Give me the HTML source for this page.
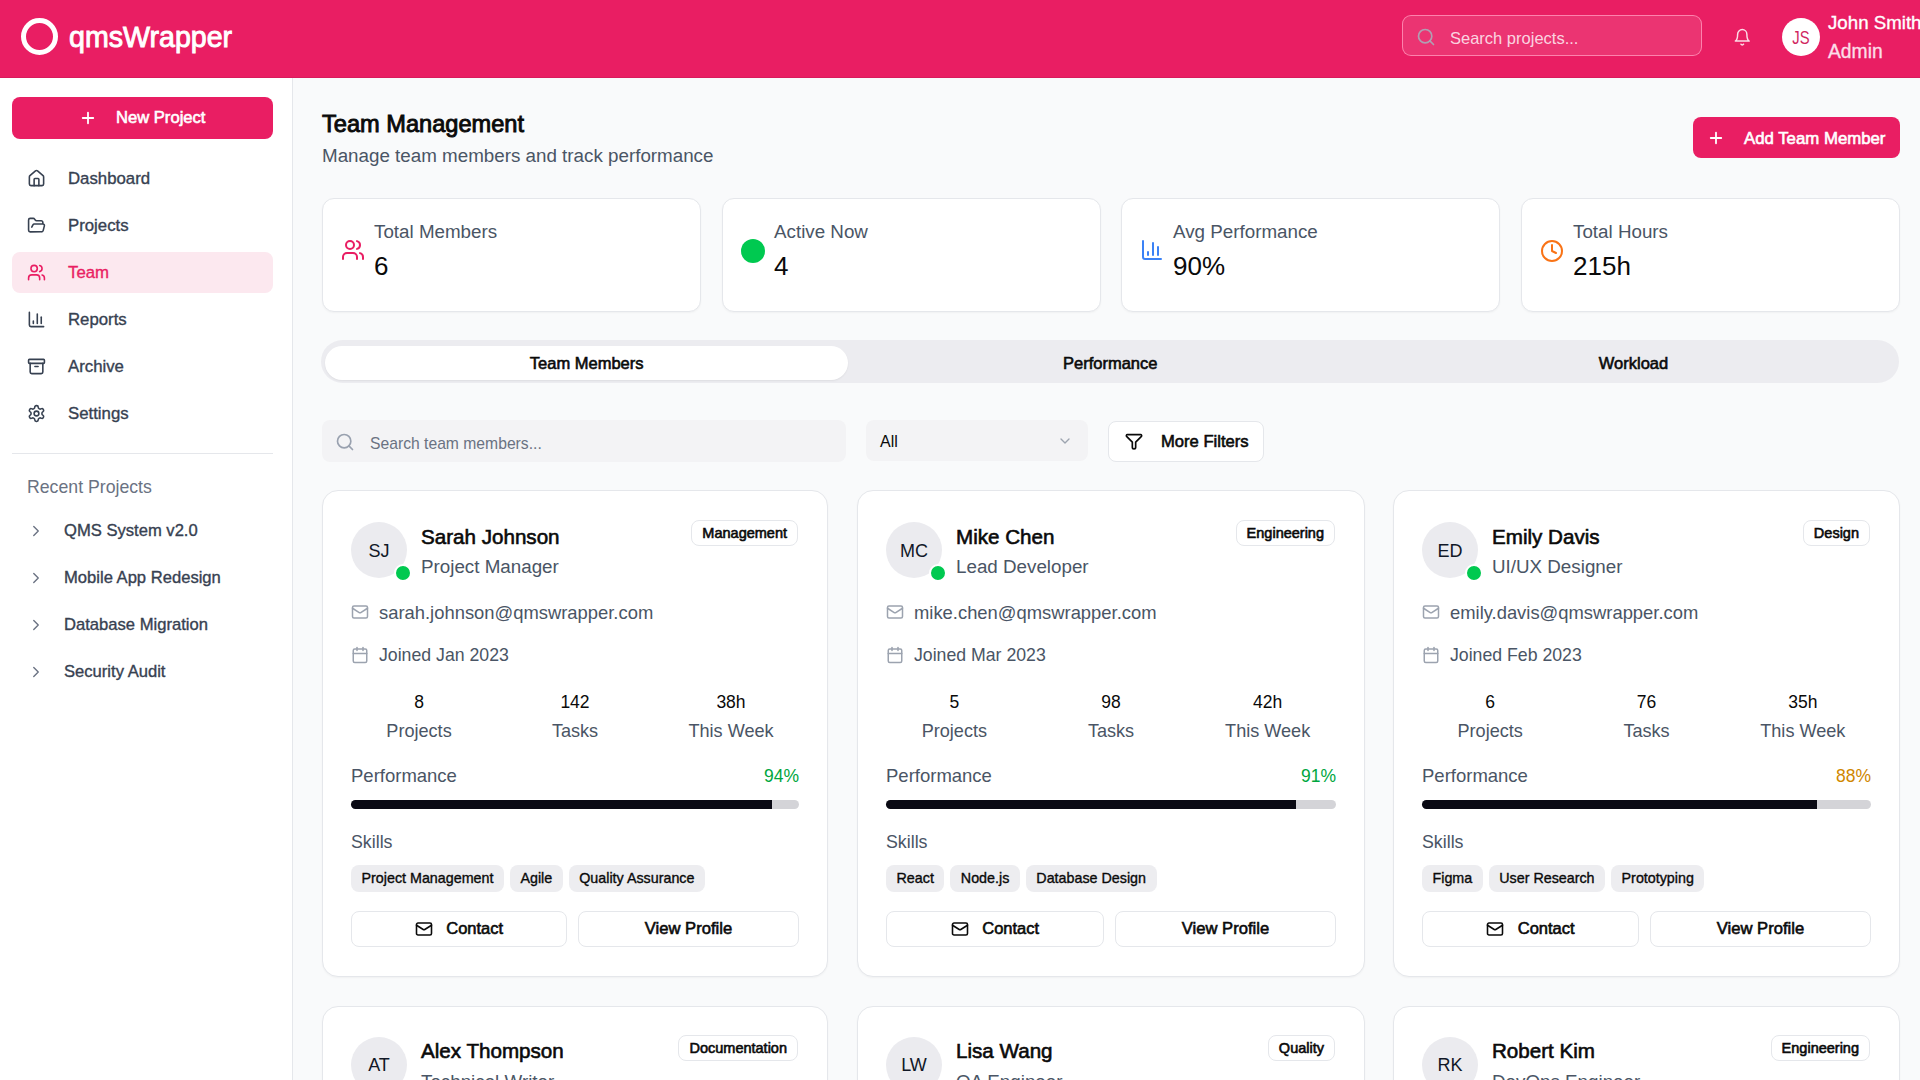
<!DOCTYPE html>
<html><head><meta charset="utf-8"><title>qmsWrapper - Team Management</title>
<style>
html,body{margin:0;padding:0;width:1920px;height:1080px;overflow:hidden;background:#f9fafb;}
body{position:relative;font-family:"Liberation Sans",sans-serif;}
.t{position:absolute;white-space:nowrap;}
.b{position:absolute;}
.i{position:absolute;}
</style></head><body>
<div class="b" style="left:0.00px;top:0.00px;width:1920.00px;height:78.00px;background:#e91e63;"></div>
<div class="b" style="left:0.00px;top:77.00px;width:1920.00px;height:1.00px;background:#d81b5c;"></div>
<div class="b" style="left:21.00px;top:18.00px;width:37.00px;height:37.00px;border:5px solid #fff;border-radius:50%;box-sizing:border-box;"></div>
<div class="t" style="left:69.00px;top:22.79px;font-size:28.6px;line-height:28.6px;color:#fff;font-weight:400;-webkit-text-stroke:0.9px #fff;">qmsWrapper</div>
<div class="b" style="left:1402.00px;top:15.00px;width:300.00px;height:41.00px;background:rgba(255,255,255,0.1);border:1px solid rgba(255,140,180,0.9);border-radius:9px;box-sizing:border-box;"></div>
<svg class="i" style="left:1416.00px;top:27.00px" width="20" height="20" viewBox="0 0 24 24" fill="none" stroke="rgba(170,170,185,0.9)" stroke-width="2" stroke-linecap="round" stroke-linejoin="round"><circle cx="11" cy="11" r="8"/><path d="m21 21-4.3-4.3"/></svg>
<div class="t" style="left:1450.00px;top:29.83px;font-size:16.5px;line-height:16.5px;color:rgba(255,255,255,0.8);font-weight:400;">Search projects...</div>
<svg class="i" style="left:1733.00px;top:28.00px" width="18.5" height="18.5" viewBox="0 0 24 24" fill="none" stroke="rgba(255,255,255,0.85)" stroke-width="1.9" stroke-linecap="round" stroke-linejoin="round"><path d="M6 8a6 6 0 0 1 12 0c0 7 3 9 3 9H3s3-2 3-9"/><path d="M10.3 21a1.94 1.94 0 0 0 3.4 0"/></svg>
<div class="b" style="left:1782.00px;top:18.00px;width:38.00px;height:38.00px;background:#fff;border-radius:50%;"></div>
<div class="t" style="left:1781px;width:40px;text-align:center;top:28.5px;font-size:18.5px;line-height:18.5px;color:#d02560;transform:scaleX(0.8);">JS</div>
<div class="t" style="left:1828.00px;top:14.17px;font-size:18.7px;line-height:18.7px;color:#fff;font-weight:400;-webkit-text-stroke:0.35px #fff;">John Smith</div>
<div class="t" style="left:1828.00px;top:41.66px;font-size:19.3px;line-height:19.3px;color:#fcdde8;font-weight:400;-webkit-text-stroke:0.35px #fcdde8;">Admin</div>
<div class="b" style="left:0.00px;top:78.00px;width:292.00px;height:1002.00px;background:#fff;"></div>
<div class="b" style="left:292.00px;top:78.00px;width:1.00px;height:1002.00px;background:#e5e7eb;"></div>
<div class="b" style="left:12.00px;top:97.00px;width:261.00px;height:42.00px;background:#e91e63;border-radius:8px;"></div>
<svg class="i" style="left:79.00px;top:109.00px" width="18" height="18" viewBox="0 0 24 24" fill="none" stroke="#fff" stroke-width="2.4" stroke-linecap="round" stroke-linejoin="round"><path d="M5 12h14"/><path d="M12 5v14"/></svg>
<div class="t" style="left:116.00px;top:109.70px;font-size:16.6px;line-height:16.6px;color:#fff;font-weight:400;-webkit-text-stroke:0.6px #fff;">New Project</div>
<svg class="i" style="left:26.50px;top:168.50px" width="19" height="19" viewBox="0 0 24 24" fill="none" stroke="#374151" stroke-width="2" stroke-linecap="round" stroke-linejoin="round"><path d="M15 21v-8a1 1 0 0 0-1-1h-4a1 1 0 0 0-1 1v8"/><path d="M3 10a2 2 0 0 1 .709-1.528l7-5.999a2 2 0 0 1 2.582 0l7 5.999A2 2 0 0 1 21 10v9a2 2 0 0 1-2 2H5a2 2 0 0 1-2-2z"/></svg>
<div class="t" style="left:68.00px;top:170.78px;font-size:16.8px;line-height:16.8px;color:#374151;font-weight:400;-webkit-text-stroke:0.35px #374151;">Dashboard</div>
<svg class="i" style="left:26.50px;top:215.50px" width="19" height="19" viewBox="0 0 24 24" fill="none" stroke="#374151" stroke-width="2" stroke-linecap="round" stroke-linejoin="round"><path d="m6 14 1.5-2.9A2 2 0 0 1 9.24 10H20a2 2 0 0 1 1.94 2.5l-1.54 6a2 2 0 0 1-1.95 1.5H4a2 2 0 0 1-2-2V5a2 2 0 0 1 2-2h3.9a2 2 0 0 1 1.69.9l.81 1.2a2 2 0 0 0 1.67.9H18a2 2 0 0 1 2 2v2"/></svg>
<div class="t" style="left:68.00px;top:217.78px;font-size:16.8px;line-height:16.8px;color:#374151;font-weight:400;-webkit-text-stroke:0.35px #374151;">Projects</div>
<div class="b" style="left:12.00px;top:252.00px;width:261.00px;height:41.00px;background:#fce8ef;border-radius:8px;"></div>
<svg class="i" style="left:26.50px;top:262.50px" width="19" height="19" viewBox="0 0 24 24" fill="none" stroke="#e91e63" stroke-width="2" stroke-linecap="round" stroke-linejoin="round"><path d="M16 21v-2a4 4 0 0 0-4-4H6a4 4 0 0 0-4 4v2"/><circle cx="9" cy="7" r="4"/><path d="M22 21v-2a4 4 0 0 0-3-3.87"/><path d="M16 3.13a4 4 0 0 1 0 7.75"/></svg>
<div class="t" style="left:68.00px;top:264.78px;font-size:16.8px;line-height:16.8px;color:#e91e63;font-weight:400;-webkit-text-stroke:0.35px #e91e63;">Team</div>
<svg class="i" style="left:26.50px;top:309.50px" width="19" height="19" viewBox="0 0 24 24" fill="none" stroke="#374151" stroke-width="2" stroke-linecap="round" stroke-linejoin="round"><path d="M3 3v16a2 2 0 0 0 2 2h16"/><path d="M18 17V9"/><path d="M13 17V5"/><path d="M8 17v-3"/></svg>
<div class="t" style="left:68.00px;top:311.78px;font-size:16.8px;line-height:16.8px;color:#374151;font-weight:400;-webkit-text-stroke:0.35px #374151;">Reports</div>
<svg class="i" style="left:26.50px;top:356.50px" width="19" height="19" viewBox="0 0 24 24" fill="none" stroke="#374151" stroke-width="2" stroke-linecap="round" stroke-linejoin="round"><rect width="20" height="5" x="2" y="3" rx="1"/><path d="M4 8v11a2 2 0 0 0 2 2h12a2 2 0 0 0 2-2V8"/><path d="M10 12h4"/></svg>
<div class="t" style="left:68.00px;top:358.78px;font-size:16.8px;line-height:16.8px;color:#374151;font-weight:400;-webkit-text-stroke:0.35px #374151;">Archive</div>
<svg class="i" style="left:26.50px;top:403.50px" width="19" height="19" viewBox="0 0 24 24" fill="none" stroke="#374151" stroke-width="2" stroke-linecap="round" stroke-linejoin="round"><path d="M12.22 2h-.44a2 2 0 0 0-2 2v.18a2 2 0 0 1-1 1.73l-.43.25a2 2 0 0 1-2 0l-.15-.08a2 2 0 0 0-2.73.73l-.22.38a2 2 0 0 0 .73 2.73l.15.1a2 2 0 0 1 1 1.72v.51a2 2 0 0 1-1 1.74l-.15.09a2 2 0 0 0-.73 2.73l.22.38a2 2 0 0 0 2.73.73l.15-.08a2 2 0 0 1 2 0l.43.25a2 2 0 0 1 1 1.73V20a2 2 0 0 0 2 2h.44a2 2 0 0 0 2-2v-.18a2 2 0 0 1 1-1.73l.43-.25a2 2 0 0 1 2 0l.15.08a2 2 0 0 0 2.73-.73l.22-.39a2 2 0 0 0-.73-2.73l-.15-.08a2 2 0 0 1-1-1.74v-.5a2 2 0 0 1 1-1.74l.15-.09a2 2 0 0 0 .73-2.73l-.22-.38a2 2 0 0 0-2.73-.73l-.15.08a2 2 0 0 1-2 0l-.43-.25a2 2 0 0 1-1-1.73V4a2 2 0 0 0-2-2z"/><circle cx="12" cy="12" r="3"/></svg>
<div class="t" style="left:68.00px;top:405.78px;font-size:16.8px;line-height:16.8px;color:#374151;font-weight:400;-webkit-text-stroke:0.35px #374151;">Settings</div>
<div class="b" style="left:12.00px;top:453.00px;width:261.00px;height:1.00px;background:#e5e7eb;"></div>
<div class="t" style="left:27.00px;top:479.02px;font-size:17.7px;line-height:17.7px;color:#6a7282;font-weight:400;">Recent Projects</div>
<svg class="i" style="left:26.50px;top:522.20px" width="18" height="18" viewBox="0 0 24 24" fill="none" stroke="#6a7282" stroke-width="1.8" stroke-linecap="round" stroke-linejoin="round"><path d="m9 18 6-6-6-6"/></svg>
<div class="t" style="left:64.00px;top:522.65px;font-size:16.6px;line-height:16.6px;color:#374151;font-weight:400;-webkit-text-stroke:0.35px #374151;">QMS System v2.0</div>
<svg class="i" style="left:26.50px;top:569.20px" width="18" height="18" viewBox="0 0 24 24" fill="none" stroke="#6a7282" stroke-width="1.8" stroke-linecap="round" stroke-linejoin="round"><path d="m9 18 6-6-6-6"/></svg>
<div class="t" style="left:64.00px;top:569.65px;font-size:16.6px;line-height:16.6px;color:#374151;font-weight:400;-webkit-text-stroke:0.35px #374151;">Mobile App Redesign</div>
<svg class="i" style="left:26.50px;top:616.20px" width="18" height="18" viewBox="0 0 24 24" fill="none" stroke="#6a7282" stroke-width="1.8" stroke-linecap="round" stroke-linejoin="round"><path d="m9 18 6-6-6-6"/></svg>
<div class="t" style="left:64.00px;top:616.65px;font-size:16.6px;line-height:16.6px;color:#374151;font-weight:400;-webkit-text-stroke:0.35px #374151;">Database Migration</div>
<svg class="i" style="left:26.50px;top:663.20px" width="18" height="18" viewBox="0 0 24 24" fill="none" stroke="#6a7282" stroke-width="1.8" stroke-linecap="round" stroke-linejoin="round"><path d="m9 18 6-6-6-6"/></svg>
<div class="t" style="left:64.00px;top:663.65px;font-size:16.6px;line-height:16.6px;color:#374151;font-weight:400;-webkit-text-stroke:0.35px #374151;">Security Audit</div>
<div class="b" style="left:293.00px;top:78.00px;width:1627.00px;height:1002.00px;background:#f9fafb;"></div>
<div class="t" style="left:322.00px;top:113.02px;font-size:23.6px;line-height:23.6px;color:#0a0a0a;font-weight:400;-webkit-text-stroke:0.9px #0a0a0a;">Team Management</div>
<div class="t" style="left:322.00px;top:147.39px;font-size:18.8px;line-height:18.8px;color:#4a5565;font-weight:400;">Manage team members and track performance</div>
<div class="b" style="left:1693.00px;top:117.00px;width:207.00px;height:41.00px;background:#e91e63;border-radius:8px;"></div>
<svg class="i" style="left:1706.50px;top:129.00px" width="18" height="18" viewBox="0 0 24 24" fill="none" stroke="#fff" stroke-width="2.4" stroke-linecap="round" stroke-linejoin="round"><path d="M5 12h14"/><path d="M12 5v14"/></svg>
<div class="t" style="left:1744.00px;top:130.78px;font-size:16.8px;line-height:16.8px;color:#fff;font-weight:400;-webkit-text-stroke:0.6px #fff;">Add Team Member</div>
<div class="b" style="left:322.00px;top:197.50px;width:379.00px;height:114.00px;background:#fff;border:1px solid #e5e7eb;border-radius:12px;box-sizing:border-box;box-shadow:0 1px 2px rgba(0,0,0,0.04);"></div>
<svg class="i" style="left:341.00px;top:237.70px" width="24" height="24" viewBox="0 0 24 24" fill="none" stroke="#e91e63" stroke-width="2" stroke-linecap="round" stroke-linejoin="round"><path d="M16 21v-2a4 4 0 0 0-4-4H6a4 4 0 0 0-4 4v2"/><circle cx="9" cy="7" r="4"/><path d="M22 21v-2a4 4 0 0 0-3-3.87"/><path d="M16 3.13a4 4 0 0 1 0 7.75"/></svg>
<div class="t" style="left:374.00px;top:222.69px;font-size:18.8px;line-height:18.8px;color:#4a5565;font-weight:400;">Total Members</div>
<div class="t" style="left:374.00px;top:253.29px;font-size:26px;line-height:26px;color:#0a0a0a;font-weight:400;">6</div>
<div class="b" style="left:722.00px;top:197.50px;width:379.00px;height:114.00px;background:#fff;border:1px solid #e5e7eb;border-radius:12px;box-sizing:border-box;box-shadow:0 1px 2px rgba(0,0,0,0.04);"></div>
<div class="b" style="left:741.00px;top:239.00px;width:24.00px;height:24.00px;background:#00c950;border-radius:50%;"></div>
<div class="t" style="left:774.00px;top:222.69px;font-size:18.8px;line-height:18.8px;color:#4a5565;font-weight:400;">Active Now</div>
<div class="t" style="left:774.00px;top:253.29px;font-size:26px;line-height:26px;color:#0a0a0a;font-weight:400;">4</div>
<div class="b" style="left:1121.00px;top:197.50px;width:379.00px;height:114.00px;background:#fff;border:1px solid #e5e7eb;border-radius:12px;box-sizing:border-box;box-shadow:0 1px 2px rgba(0,0,0,0.04);"></div>
<svg class="i" style="left:1140.00px;top:237.70px" width="24" height="24" viewBox="0 0 24 24" fill="none" stroke="#3b82f6" stroke-width="2" stroke-linecap="round" stroke-linejoin="round"><path d="M3 3v16a2 2 0 0 0 2 2h16"/><path d="M18 17V9"/><path d="M13 17V5"/><path d="M8 17v-3"/></svg>
<div class="t" style="left:1173.00px;top:222.69px;font-size:18.8px;line-height:18.8px;color:#4a5565;font-weight:400;">Avg Performance</div>
<div class="t" style="left:1173.00px;top:253.29px;font-size:26px;line-height:26px;color:#0a0a0a;font-weight:400;">90%</div>
<div class="b" style="left:1521.00px;top:197.50px;width:379.00px;height:114.00px;background:#fff;border:1px solid #e5e7eb;border-radius:12px;box-sizing:border-box;box-shadow:0 1px 2px rgba(0,0,0,0.04);"></div>
<svg class="i" style="left:1539.80px;top:238.50px" width="24" height="24" viewBox="0 0 24 24" fill="none" stroke="#f97316" stroke-width="2" stroke-linecap="round" stroke-linejoin="round"><circle cx="12" cy="12" r="10"/><polyline points="12 6 12 12 16 14"/></svg>
<div class="t" style="left:1573.00px;top:222.69px;font-size:18.8px;line-height:18.8px;color:#4a5565;font-weight:400;">Total Hours</div>
<div class="t" style="left:1573.00px;top:253.29px;font-size:26px;line-height:26px;color:#0a0a0a;font-weight:400;">215h</div>
<div class="b" style="left:321.00px;top:340.00px;width:1578.00px;height:43.00px;background:#ececf0;border-radius:22px;"></div>
<div class="b" style="left:325.00px;top:346.00px;width:523.00px;height:34.00px;background:#fff;border-radius:17px;box-shadow:0 1px 2px rgba(0,0,0,0.06);"></div>
<div class="t" style="left:386.70px;width:400px;text-align:center;top:354.53px;font-size:16.5px;line-height:16.5px;color:#0a0a0a;font-weight:400;-webkit-text-stroke:0.6px #0a0a0a;">Team Members</div>
<div class="t" style="left:910.20px;width:400px;text-align:center;top:354.53px;font-size:16.5px;line-height:16.5px;color:#0a0a0a;font-weight:400;-webkit-text-stroke:0.6px #0a0a0a;">Performance</div>
<div class="t" style="left:1433.50px;width:400px;text-align:center;top:354.53px;font-size:16.5px;line-height:16.5px;color:#0a0a0a;font-weight:400;-webkit-text-stroke:0.6px #0a0a0a;">Workload</div>
<div class="b" style="left:322.00px;top:420.00px;width:524.00px;height:42.00px;background:#f3f3f5;border-radius:8px;"></div>
<svg class="i" style="left:335.30px;top:431.80px" width="20" height="20" viewBox="0 0 24 24" fill="none" stroke="#99a1af" stroke-width="2" stroke-linecap="round" stroke-linejoin="round"><circle cx="11" cy="11" r="8"/><path d="m21 21-4.3-4.3"/></svg>
<div class="t" style="left:370.00px;top:435.71px;font-size:15.7px;line-height:15.7px;color:#6a7282;font-weight:400;">Search team members...</div>
<div class="b" style="left:866.00px;top:420.00px;width:222.00px;height:41.00px;background:#f3f3f5;border-radius:8px;"></div>
<div class="t" style="left:880.00px;top:434.46px;font-size:16px;line-height:16px;color:#0a0a0a;font-weight:400;">All</div>
<svg class="i" style="left:1057.00px;top:433.00px" width="16" height="16" viewBox="0 0 24 24" fill="none" stroke="#9ca3af" stroke-width="2" stroke-linecap="round" stroke-linejoin="round"><path d="m6 9 6 6 6-6"/></svg>
<div class="b" style="left:1108.00px;top:421.00px;width:156.00px;height:41.00px;background:#fff;border:1px solid #e5e7eb;border-radius:8px;box-sizing:border-box;"></div>
<svg class="i" style="left:1123.50px;top:431.00px" width="20" height="20" viewBox="0 0 24 24" fill="none" stroke="#0a0a0a" stroke-width="2" stroke-linecap="round" stroke-linejoin="round"><path d="M4 4.4H20a1.2 1.2 0 0 1 .9 2L14 13.4V19.6a2 2 0 0 1-4 0V13.4L3.1 6.4a1.2 1.2 0 0 1 .9-2z"/></svg>
<div class="t" style="left:1161.00px;top:433.95px;font-size:16.6px;line-height:16.6px;color:#0a0a0a;font-weight:400;-webkit-text-stroke:0.6px #0a0a0a;">More Filters</div>
<div class="b" style="left:322.00px;top:490.00px;width:506.00px;height:486.50px;background:#fff;border:1px solid #e5e7eb;border-radius:16px;box-sizing:border-box;box-shadow:0 1px 2px rgba(0,0,0,0.04);"></div>
<div class="b" style="left:351.00px;top:522.00px;width:56.00px;height:56.00px;background:#ebebef;border-radius:50%;"></div>
<div class="t" style="left:351.00px;width:56px;text-align:center;top:541.96px;font-size:18px;line-height:18px;color:#111827;font-weight:400;">SJ</div>
<div class="b" style="left:394.00px;top:563.50px;width:18.00px;height:18.00px;background:#00c950;border:2px solid #fff;border-radius:50%;box-sizing:border-box;"></div>
<div class="t" style="left:421.00px;top:526.56px;font-size:20.6px;line-height:20.6px;color:#0a0a0a;font-weight:400;-webkit-text-stroke:0.6px #0a0a0a;">Sarah Johnson</div>
<div class="t" style="left:421.00px;top:558.39px;font-size:18.8px;line-height:18.8px;color:#4a5565;font-weight:400;">Project Manager</div>
<div class="b" style="left:691.37px;top:520.00px;width:106.63px;height:26.00px;background:#fff;border:1px solid #e5e7eb;border-radius:8px;box-sizing:border-box;"></div>
<div class="t" style="left:702.37px;top:526.03px;font-size:14.5px;line-height:14.5px;color:#0a0a0a;font-weight:400;-webkit-text-stroke:0.6px #0a0a0a;">Management</div>
<svg class="i" style="left:350.75px;top:602.75px" width="18" height="18" viewBox="0 0 24 24" fill="none" stroke="#9ca3af" stroke-width="2" stroke-linecap="round" stroke-linejoin="round"><rect width="20" height="16" x="2" y="4" rx="2"/><path d="m22 7-8.97 5.7a1.94 1.94 0 0 1-2.06 0L2 7"/></svg>
<div class="t" style="left:379.00px;top:603.62px;font-size:18.4px;line-height:18.4px;color:#4a5565;font-weight:400;">sarah.johnson@qmswrapper.com</div>
<svg class="i" style="left:350.50px;top:645.50px" width="18" height="18" viewBox="0 0 24 24" fill="none" stroke="#9ca3af" stroke-width="2" stroke-linecap="round" stroke-linejoin="round"><rect width="18" height="18" x="3" y="4" rx="2" ry="2"/><line x1="16" x2="16" y1="2" y2="6"/><line x1="8" x2="8" y1="2" y2="6"/><line x1="3" x2="21" y1="10" y2="10"/></svg>
<div class="t" style="left:379.00px;top:647.02px;font-size:17.7px;line-height:17.7px;color:#4a5565;font-weight:400;">Joined Jan 2023</div>
<div class="t" style="left:351.00px;width:136px;text-align:center;top:694.39px;font-size:17.5px;line-height:17.5px;color:#0a0a0a;font-weight:400;">8</div>
<div class="t" style="left:351.00px;width:136px;text-align:center;top:721.88px;font-size:18.1px;line-height:18.1px;color:#4a5565;font-weight:400;">Projects</div>
<div class="t" style="left:507.00px;width:136px;text-align:center;top:694.39px;font-size:17.5px;line-height:17.5px;color:#0a0a0a;font-weight:400;">142</div>
<div class="t" style="left:507.00px;width:136px;text-align:center;top:721.88px;font-size:18.1px;line-height:18.1px;color:#4a5565;font-weight:400;">Tasks</div>
<div class="t" style="left:663.00px;width:136px;text-align:center;top:694.39px;font-size:17.5px;line-height:17.5px;color:#0a0a0a;font-weight:400;">38h</div>
<div class="t" style="left:663.00px;width:136px;text-align:center;top:721.88px;font-size:18.1px;line-height:18.1px;color:#4a5565;font-weight:400;">This Week</div>
<div class="t" style="left:351.00px;top:767.34px;font-size:18.5px;line-height:18.5px;color:#4a5565;font-weight:400;">Performance</div>
<div class="t" style="left:499.00px;width:300px;text-align:right;top:768.19px;font-size:17.5px;line-height:17.5px;color:#00a63e;font-weight:400">94%</div>
<div class="b" style="left:351.00px;top:800.00px;width:448.00px;height:9.00px;background:#d4d4d8;border-radius:5px;overflow:hidden;"></div>
<div class="b" style="left:351.00px;top:800.00px;width:421.12px;height:9.00px;background:#0a0a14;border-radius:5px 0 0 5px;"></div>
<div class="t" style="left:351.00px;top:833.68px;font-size:17.8px;line-height:17.8px;color:#4a5565;font-weight:400;">Skills</div>
<div class="b" style="left:351.00px;top:865.00px;width:152.94px;height:27.00px;background:#ededf0;border-radius:8px;"></div>
<div class="t" style="left:361.50px;top:871.20px;font-size:14.3px;line-height:14.3px;color:#0a0a0a;font-weight:400;-webkit-text-stroke:0.35px #0a0a0a;">Project Management</div>
<div class="b" style="left:509.94px;top:865.00px;width:52.80px;height:27.00px;background:#ededf0;border-radius:8px;"></div>
<div class="t" style="left:520.44px;top:871.20px;font-size:14.3px;line-height:14.3px;color:#0a0a0a;font-weight:400;-webkit-text-stroke:0.35px #0a0a0a;">Agile</div>
<div class="b" style="left:568.74px;top:865.00px;width:136.25px;height:27.00px;background:#ededf0;border-radius:8px;"></div>
<div class="t" style="left:579.24px;top:871.20px;font-size:14.3px;line-height:14.3px;color:#0a0a0a;font-weight:400;-webkit-text-stroke:0.35px #0a0a0a;">Quality Assurance</div>
<div class="b" style="left:351.00px;top:910.50px;width:216.00px;height:36.50px;background:#fff;border:1px solid #e5e7eb;border-radius:8px;box-sizing:border-box;"></div>
<svg class="i" style="left:414.75px;top:920.00px" width="18" height="18" viewBox="0 0 24 24" fill="none" stroke="#0a0a0a" stroke-width="2.1" stroke-linecap="round" stroke-linejoin="round"><rect width="20" height="16" x="2" y="4" rx="2"/><path d="m22 7-8.97 5.7a1.94 1.94 0 0 1-2.06 0L2 7"/></svg>
<div class="t" style="left:446.25px;top:920.28px;font-size:16.5px;line-height:16.5px;color:#0a0a0a;font-weight:400;-webkit-text-stroke:0.6px #0a0a0a;">Contact</div>
<div class="b" style="left:578.00px;top:910.50px;width:221.00px;height:36.50px;background:#fff;border:1px solid #e5e7eb;border-radius:8px;box-sizing:border-box;"></div>
<div class="t" style="left:488.50px;width:400px;text-align:center;top:921.15px;font-size:16.6px;line-height:16.6px;color:#0a0a0a;font-weight:400;-webkit-text-stroke:0.6px #0a0a0a;">View Profile</div>
<div class="b" style="left:857.00px;top:490.00px;width:508.00px;height:486.50px;background:#fff;border:1px solid #e5e7eb;border-radius:16px;box-sizing:border-box;box-shadow:0 1px 2px rgba(0,0,0,0.04);"></div>
<div class="b" style="left:886.00px;top:522.00px;width:56.00px;height:56.00px;background:#ebebef;border-radius:50%;"></div>
<div class="t" style="left:886.00px;width:56px;text-align:center;top:541.96px;font-size:18px;line-height:18px;color:#111827;font-weight:400;">MC</div>
<div class="b" style="left:929.00px;top:563.50px;width:18.00px;height:18.00px;background:#00c950;border:2px solid #fff;border-radius:50%;box-sizing:border-box;"></div>
<div class="t" style="left:956.00px;top:526.56px;font-size:20.6px;line-height:20.6px;color:#0a0a0a;font-weight:400;-webkit-text-stroke:0.6px #0a0a0a;">Mike Chen</div>
<div class="t" style="left:956.00px;top:558.39px;font-size:18.8px;line-height:18.8px;color:#4a5565;font-weight:400;">Lead Developer</div>
<div class="b" style="left:1235.61px;top:520.00px;width:99.39px;height:26.00px;background:#fff;border:1px solid #e5e7eb;border-radius:8px;box-sizing:border-box;"></div>
<div class="t" style="left:1246.61px;top:526.03px;font-size:14.5px;line-height:14.5px;color:#0a0a0a;font-weight:400;-webkit-text-stroke:0.6px #0a0a0a;">Engineering</div>
<svg class="i" style="left:885.75px;top:602.75px" width="18" height="18" viewBox="0 0 24 24" fill="none" stroke="#9ca3af" stroke-width="2" stroke-linecap="round" stroke-linejoin="round"><rect width="20" height="16" x="2" y="4" rx="2"/><path d="m22 7-8.97 5.7a1.94 1.94 0 0 1-2.06 0L2 7"/></svg>
<div class="t" style="left:914.00px;top:603.62px;font-size:18.4px;line-height:18.4px;color:#4a5565;font-weight:400;">mike.chen@qmswrapper.com</div>
<svg class="i" style="left:885.50px;top:645.50px" width="18" height="18" viewBox="0 0 24 24" fill="none" stroke="#9ca3af" stroke-width="2" stroke-linecap="round" stroke-linejoin="round"><rect width="18" height="18" x="3" y="4" rx="2" ry="2"/><line x1="16" x2="16" y1="2" y2="6"/><line x1="8" x2="8" y1="2" y2="6"/><line x1="3" x2="21" y1="10" y2="10"/></svg>
<div class="t" style="left:914.00px;top:647.02px;font-size:17.7px;line-height:17.7px;color:#4a5565;font-weight:400;">Joined Mar 2023</div>
<div class="t" style="left:886.33px;width:136px;text-align:center;top:694.39px;font-size:17.5px;line-height:17.5px;color:#0a0a0a;font-weight:400;">5</div>
<div class="t" style="left:886.33px;width:136px;text-align:center;top:721.88px;font-size:18.1px;line-height:18.1px;color:#4a5565;font-weight:400;">Projects</div>
<div class="t" style="left:1043.00px;width:136px;text-align:center;top:694.39px;font-size:17.5px;line-height:17.5px;color:#0a0a0a;font-weight:400;">98</div>
<div class="t" style="left:1043.00px;width:136px;text-align:center;top:721.88px;font-size:18.1px;line-height:18.1px;color:#4a5565;font-weight:400;">Tasks</div>
<div class="t" style="left:1199.67px;width:136px;text-align:center;top:694.39px;font-size:17.5px;line-height:17.5px;color:#0a0a0a;font-weight:400;">42h</div>
<div class="t" style="left:1199.67px;width:136px;text-align:center;top:721.88px;font-size:18.1px;line-height:18.1px;color:#4a5565;font-weight:400;">This Week</div>
<div class="t" style="left:886.00px;top:767.34px;font-size:18.5px;line-height:18.5px;color:#4a5565;font-weight:400;">Performance</div>
<div class="t" style="left:1036.00px;width:300px;text-align:right;top:768.19px;font-size:17.5px;line-height:17.5px;color:#00a63e;font-weight:400">91%</div>
<div class="b" style="left:886.00px;top:800.00px;width:450.00px;height:9.00px;background:#d4d4d8;border-radius:5px;overflow:hidden;"></div>
<div class="b" style="left:886.00px;top:800.00px;width:409.50px;height:9.00px;background:#0a0a14;border-radius:5px 0 0 5px;"></div>
<div class="t" style="left:886.00px;top:833.68px;font-size:17.8px;line-height:17.8px;color:#4a5565;font-weight:400;">Skills</div>
<div class="b" style="left:886.00px;top:865.00px;width:58.35px;height:27.00px;background:#ededf0;border-radius:8px;"></div>
<div class="t" style="left:896.50px;top:871.20px;font-size:14.3px;line-height:14.3px;color:#0a0a0a;font-weight:400;-webkit-text-stroke:0.35px #0a0a0a;">React</div>
<div class="b" style="left:950.35px;top:865.00px;width:69.48px;height:27.00px;background:#ededf0;border-radius:8px;"></div>
<div class="t" style="left:960.85px;top:871.20px;font-size:14.3px;line-height:14.3px;color:#0a0a0a;font-weight:400;-webkit-text-stroke:0.35px #0a0a0a;">Node.js</div>
<div class="b" style="left:1025.84px;top:865.00px;width:130.69px;height:27.00px;background:#ededf0;border-radius:8px;"></div>
<div class="t" style="left:1036.34px;top:871.20px;font-size:14.3px;line-height:14.3px;color:#0a0a0a;font-weight:400;-webkit-text-stroke:0.35px #0a0a0a;">Database Design</div>
<div class="b" style="left:886.00px;top:910.50px;width:218.00px;height:36.50px;background:#fff;border:1px solid #e5e7eb;border-radius:8px;box-sizing:border-box;"></div>
<svg class="i" style="left:950.75px;top:920.00px" width="18" height="18" viewBox="0 0 24 24" fill="none" stroke="#0a0a0a" stroke-width="2.1" stroke-linecap="round" stroke-linejoin="round"><rect width="20" height="16" x="2" y="4" rx="2"/><path d="m22 7-8.97 5.7a1.94 1.94 0 0 1-2.06 0L2 7"/></svg>
<div class="t" style="left:982.25px;top:920.28px;font-size:16.5px;line-height:16.5px;color:#0a0a0a;font-weight:400;-webkit-text-stroke:0.6px #0a0a0a;">Contact</div>
<div class="b" style="left:1115.00px;top:910.50px;width:221.00px;height:36.50px;background:#fff;border:1px solid #e5e7eb;border-radius:8px;box-sizing:border-box;"></div>
<div class="t" style="left:1025.50px;width:400px;text-align:center;top:921.15px;font-size:16.6px;line-height:16.6px;color:#0a0a0a;font-weight:400;-webkit-text-stroke:0.6px #0a0a0a;">View Profile</div>
<div class="b" style="left:1393.00px;top:490.00px;width:507.00px;height:486.50px;background:#fff;border:1px solid #e5e7eb;border-radius:16px;box-sizing:border-box;box-shadow:0 1px 2px rgba(0,0,0,0.04);"></div>
<div class="b" style="left:1422.00px;top:522.00px;width:56.00px;height:56.00px;background:#ebebef;border-radius:50%;"></div>
<div class="t" style="left:1422.00px;width:56px;text-align:center;top:541.96px;font-size:18px;line-height:18px;color:#111827;font-weight:400;">ED</div>
<div class="b" style="left:1465.00px;top:563.50px;width:18.00px;height:18.00px;background:#00c950;border:2px solid #fff;border-radius:50%;box-sizing:border-box;"></div>
<div class="t" style="left:1492.00px;top:526.56px;font-size:20.6px;line-height:20.6px;color:#0a0a0a;font-weight:400;-webkit-text-stroke:0.6px #0a0a0a;">Emily Davis</div>
<div class="t" style="left:1492.00px;top:558.39px;font-size:18.8px;line-height:18.8px;color:#4a5565;font-weight:400;">UI/UX Designer</div>
<div class="b" style="left:1802.87px;top:520.00px;width:67.13px;height:26.00px;background:#fff;border:1px solid #e5e7eb;border-radius:8px;box-sizing:border-box;"></div>
<div class="t" style="left:1813.87px;top:526.03px;font-size:14.5px;line-height:14.5px;color:#0a0a0a;font-weight:400;-webkit-text-stroke:0.6px #0a0a0a;">Design</div>
<svg class="i" style="left:1421.75px;top:602.75px" width="18" height="18" viewBox="0 0 24 24" fill="none" stroke="#9ca3af" stroke-width="2" stroke-linecap="round" stroke-linejoin="round"><rect width="20" height="16" x="2" y="4" rx="2"/><path d="m22 7-8.97 5.7a1.94 1.94 0 0 1-2.06 0L2 7"/></svg>
<div class="t" style="left:1450.00px;top:603.62px;font-size:18.4px;line-height:18.4px;color:#4a5565;font-weight:400;">emily.davis@qmswrapper.com</div>
<svg class="i" style="left:1421.50px;top:645.50px" width="18" height="18" viewBox="0 0 24 24" fill="none" stroke="#9ca3af" stroke-width="2" stroke-linecap="round" stroke-linejoin="round"><rect width="18" height="18" x="3" y="4" rx="2" ry="2"/><line x1="16" x2="16" y1="2" y2="6"/><line x1="8" x2="8" y1="2" y2="6"/><line x1="3" x2="21" y1="10" y2="10"/></svg>
<div class="t" style="left:1450.00px;top:647.02px;font-size:17.7px;line-height:17.7px;color:#4a5565;font-weight:400;">Joined Feb 2023</div>
<div class="t" style="left:1422.17px;width:136px;text-align:center;top:694.39px;font-size:17.5px;line-height:17.5px;color:#0a0a0a;font-weight:400;">6</div>
<div class="t" style="left:1422.17px;width:136px;text-align:center;top:721.88px;font-size:18.1px;line-height:18.1px;color:#4a5565;font-weight:400;">Projects</div>
<div class="t" style="left:1578.50px;width:136px;text-align:center;top:694.39px;font-size:17.5px;line-height:17.5px;color:#0a0a0a;font-weight:400;">76</div>
<div class="t" style="left:1578.50px;width:136px;text-align:center;top:721.88px;font-size:18.1px;line-height:18.1px;color:#4a5565;font-weight:400;">Tasks</div>
<div class="t" style="left:1734.83px;width:136px;text-align:center;top:694.39px;font-size:17.5px;line-height:17.5px;color:#0a0a0a;font-weight:400;">35h</div>
<div class="t" style="left:1734.83px;width:136px;text-align:center;top:721.88px;font-size:18.1px;line-height:18.1px;color:#4a5565;font-weight:400;">This Week</div>
<div class="t" style="left:1422.00px;top:767.34px;font-size:18.5px;line-height:18.5px;color:#4a5565;font-weight:400;">Performance</div>
<div class="t" style="left:1571.00px;width:300px;text-align:right;top:768.19px;font-size:17.5px;line-height:17.5px;color:#d08700;font-weight:400">88%</div>
<div class="b" style="left:1422.00px;top:800.00px;width:449.00px;height:9.00px;background:#d4d4d8;border-radius:5px;overflow:hidden;"></div>
<div class="b" style="left:1422.00px;top:800.00px;width:395.12px;height:9.00px;background:#0a0a14;border-radius:5px 0 0 5px;"></div>
<div class="t" style="left:1422.00px;top:833.68px;font-size:17.8px;line-height:17.8px;color:#4a5565;font-weight:400;">Skills</div>
<div class="b" style="left:1422.00px;top:865.00px;width:60.73px;height:27.00px;background:#ededf0;border-radius:8px;"></div>
<div class="t" style="left:1432.50px;top:871.20px;font-size:14.3px;line-height:14.3px;color:#0a0a0a;font-weight:400;-webkit-text-stroke:0.35px #0a0a0a;">Figma</div>
<div class="b" style="left:1488.73px;top:865.00px;width:116.36px;height:27.00px;background:#ededf0;border-radius:8px;"></div>
<div class="t" style="left:1499.23px;top:871.20px;font-size:14.3px;line-height:14.3px;color:#0a0a0a;font-weight:400;-webkit-text-stroke:0.35px #0a0a0a;">User Research</div>
<div class="b" style="left:1611.09px;top:865.00px;width:93.33px;height:27.00px;background:#ededf0;border-radius:8px;"></div>
<div class="t" style="left:1621.59px;top:871.20px;font-size:14.3px;line-height:14.3px;color:#0a0a0a;font-weight:400;-webkit-text-stroke:0.35px #0a0a0a;">Prototyping</div>
<div class="b" style="left:1422.00px;top:910.50px;width:217.00px;height:36.50px;background:#fff;border:1px solid #e5e7eb;border-radius:8px;box-sizing:border-box;"></div>
<svg class="i" style="left:1486.25px;top:920.00px" width="18" height="18" viewBox="0 0 24 24" fill="none" stroke="#0a0a0a" stroke-width="2.1" stroke-linecap="round" stroke-linejoin="round"><rect width="20" height="16" x="2" y="4" rx="2"/><path d="m22 7-8.97 5.7a1.94 1.94 0 0 1-2.06 0L2 7"/></svg>
<div class="t" style="left:1517.75px;top:920.28px;font-size:16.5px;line-height:16.5px;color:#0a0a0a;font-weight:400;-webkit-text-stroke:0.6px #0a0a0a;">Contact</div>
<div class="b" style="left:1650.00px;top:910.50px;width:221.00px;height:36.50px;background:#fff;border:1px solid #e5e7eb;border-radius:8px;box-sizing:border-box;"></div>
<div class="t" style="left:1560.50px;width:400px;text-align:center;top:921.15px;font-size:16.6px;line-height:16.6px;color:#0a0a0a;font-weight:400;-webkit-text-stroke:0.6px #0a0a0a;">View Profile</div>
<div class="b" style="left:322.00px;top:1006.00px;width:506.00px;height:486.50px;background:#fff;border:1px solid #e5e7eb;border-radius:16px;box-sizing:border-box;box-shadow:0 1px 2px rgba(0,0,0,0.04);"></div>
<div class="b" style="left:351.00px;top:1036.50px;width:56.00px;height:56.00px;background:#ebebef;border-radius:50%;"></div>
<div class="t" style="left:351.00px;width:56px;text-align:center;top:1056.46px;font-size:18px;line-height:18px;color:#111827;font-weight:400;">AT</div>
<div class="t" style="left:421.00px;top:1041.06px;font-size:20.6px;line-height:20.6px;color:#0a0a0a;font-weight:400;-webkit-text-stroke:0.6px #0a0a0a;">Alex Thompson</div>
<div class="t" style="left:421.00px;top:1072.89px;font-size:18.8px;line-height:18.8px;color:#4a5565;font-weight:400;">Technical Writer</div>
<div class="b" style="left:678.48px;top:1034.50px;width:119.52px;height:26.00px;background:#fff;border:1px solid #e5e7eb;border-radius:8px;box-sizing:border-box;"></div>
<div class="t" style="left:689.48px;top:1040.53px;font-size:14.5px;line-height:14.5px;color:#0a0a0a;font-weight:400;-webkit-text-stroke:0.6px #0a0a0a;">Documentation</div>
<svg class="i" style="left:350.75px;top:1118.75px" width="18" height="18" viewBox="0 0 24 24" fill="none" stroke="#9ca3af" stroke-width="2" stroke-linecap="round" stroke-linejoin="round"><rect width="20" height="16" x="2" y="4" rx="2"/><path d="m22 7-8.97 5.7a1.94 1.94 0 0 1-2.06 0L2 7"/></svg>
<div class="t" style="left:379.00px;top:1119.62px;font-size:18.4px;line-height:18.4px;color:#4a5565;font-weight:400;">alex.thompson@qmswrapper.com</div>
<svg class="i" style="left:350.50px;top:1161.50px" width="18" height="18" viewBox="0 0 24 24" fill="none" stroke="#9ca3af" stroke-width="2" stroke-linecap="round" stroke-linejoin="round"><rect width="18" height="18" x="3" y="4" rx="2" ry="2"/><line x1="16" x2="16" y1="2" y2="6"/><line x1="8" x2="8" y1="2" y2="6"/><line x1="3" x2="21" y1="10" y2="10"/></svg>
<div class="t" style="left:379.00px;top:1163.02px;font-size:17.7px;line-height:17.7px;color:#4a5565;font-weight:400;">Joined Apr 2023</div>
<div class="t" style="left:351.00px;width:136px;text-align:center;top:1210.39px;font-size:17.5px;line-height:17.5px;color:#0a0a0a;font-weight:400;">4</div>
<div class="t" style="left:351.00px;width:136px;text-align:center;top:1237.88px;font-size:18.1px;line-height:18.1px;color:#4a5565;font-weight:400;">Projects</div>
<div class="t" style="left:507.00px;width:136px;text-align:center;top:1210.39px;font-size:17.5px;line-height:17.5px;color:#0a0a0a;font-weight:400;">64</div>
<div class="t" style="left:507.00px;width:136px;text-align:center;top:1237.88px;font-size:18.1px;line-height:18.1px;color:#4a5565;font-weight:400;">Tasks</div>
<div class="t" style="left:663.00px;width:136px;text-align:center;top:1210.39px;font-size:17.5px;line-height:17.5px;color:#0a0a0a;font-weight:400;">32h</div>
<div class="t" style="left:663.00px;width:136px;text-align:center;top:1237.88px;font-size:18.1px;line-height:18.1px;color:#4a5565;font-weight:400;">This Week</div>
<div class="t" style="left:351.00px;top:1283.34px;font-size:18.5px;line-height:18.5px;color:#4a5565;font-weight:400;">Performance</div>
<div class="t" style="left:499.00px;width:300px;text-align:right;top:1284.19px;font-size:17.5px;line-height:17.5px;color:#00a63e;font-weight:400">92%</div>
<div class="b" style="left:351.00px;top:1316.00px;width:448.00px;height:9.00px;background:#d4d4d8;border-radius:5px;overflow:hidden;"></div>
<div class="b" style="left:351.00px;top:1316.00px;width:412.16px;height:9.00px;background:#0a0a14;border-radius:5px 0 0 5px;"></div>
<div class="t" style="left:351.00px;top:1349.68px;font-size:17.8px;line-height:17.8px;color:#4a5565;font-weight:400;">Skills</div>
<div class="b" style="left:351.00px;top:1381.00px;width:128.82px;height:27.00px;background:#ededf0;border-radius:8px;"></div>
<div class="t" style="left:361.50px;top:1387.20px;font-size:14.3px;line-height:14.3px;color:#0a0a0a;font-weight:400;-webkit-text-stroke:0.35px #0a0a0a;">Technical Writing</div>
<div class="b" style="left:485.82px;top:1381.00px;width:80.60px;height:27.00px;background:#ededf0;border-radius:8px;"></div>
<div class="t" style="left:496.32px;top:1387.20px;font-size:14.3px;line-height:14.3px;color:#0a0a0a;font-weight:400;-webkit-text-stroke:0.35px #0a0a0a;">API Docs</div>
<div class="b" style="left:351.00px;top:1426.50px;width:216.00px;height:36.50px;background:#fff;border:1px solid #e5e7eb;border-radius:8px;box-sizing:border-box;"></div>
<svg class="i" style="left:414.75px;top:1436.00px" width="18" height="18" viewBox="0 0 24 24" fill="none" stroke="#0a0a0a" stroke-width="2.1" stroke-linecap="round" stroke-linejoin="round"><rect width="20" height="16" x="2" y="4" rx="2"/><path d="m22 7-8.97 5.7a1.94 1.94 0 0 1-2.06 0L2 7"/></svg>
<div class="t" style="left:446.25px;top:1436.28px;font-size:16.5px;line-height:16.5px;color:#0a0a0a;font-weight:400;-webkit-text-stroke:0.6px #0a0a0a;">Contact</div>
<div class="b" style="left:578.00px;top:1426.50px;width:221.00px;height:36.50px;background:#fff;border:1px solid #e5e7eb;border-radius:8px;box-sizing:border-box;"></div>
<div class="t" style="left:488.50px;width:400px;text-align:center;top:1437.15px;font-size:16.6px;line-height:16.6px;color:#0a0a0a;font-weight:400;-webkit-text-stroke:0.6px #0a0a0a;">View Profile</div>
<div class="b" style="left:857.00px;top:1006.00px;width:508.00px;height:486.50px;background:#fff;border:1px solid #e5e7eb;border-radius:16px;box-sizing:border-box;box-shadow:0 1px 2px rgba(0,0,0,0.04);"></div>
<div class="b" style="left:886.00px;top:1036.50px;width:56.00px;height:56.00px;background:#ebebef;border-radius:50%;"></div>
<div class="t" style="left:886.00px;width:56px;text-align:center;top:1056.46px;font-size:18px;line-height:18px;color:#111827;font-weight:400;">LW</div>
<div class="t" style="left:956.00px;top:1041.06px;font-size:20.6px;line-height:20.6px;color:#0a0a0a;font-weight:400;-webkit-text-stroke:0.6px #0a0a0a;">Lisa Wang</div>
<div class="t" style="left:956.00px;top:1072.89px;font-size:18.8px;line-height:18.8px;color:#4a5565;font-weight:400;">QA Engineer</div>
<div class="b" style="left:1267.87px;top:1034.50px;width:67.13px;height:26.00px;background:#fff;border:1px solid #e5e7eb;border-radius:8px;box-sizing:border-box;"></div>
<div class="t" style="left:1278.87px;top:1040.53px;font-size:14.5px;line-height:14.5px;color:#0a0a0a;font-weight:400;-webkit-text-stroke:0.6px #0a0a0a;">Quality</div>
<svg class="i" style="left:885.75px;top:1118.75px" width="18" height="18" viewBox="0 0 24 24" fill="none" stroke="#9ca3af" stroke-width="2" stroke-linecap="round" stroke-linejoin="round"><rect width="20" height="16" x="2" y="4" rx="2"/><path d="m22 7-8.97 5.7a1.94 1.94 0 0 1-2.06 0L2 7"/></svg>
<div class="t" style="left:914.00px;top:1119.62px;font-size:18.4px;line-height:18.4px;color:#4a5565;font-weight:400;">lisa.wang@qmswrapper.com</div>
<svg class="i" style="left:885.50px;top:1161.50px" width="18" height="18" viewBox="0 0 24 24" fill="none" stroke="#9ca3af" stroke-width="2" stroke-linecap="round" stroke-linejoin="round"><rect width="18" height="18" x="3" y="4" rx="2" ry="2"/><line x1="16" x2="16" y1="2" y2="6"/><line x1="8" x2="8" y1="2" y2="6"/><line x1="3" x2="21" y1="10" y2="10"/></svg>
<div class="t" style="left:914.00px;top:1163.02px;font-size:17.7px;line-height:17.7px;color:#4a5565;font-weight:400;">Joined May 2023</div>
<div class="t" style="left:886.33px;width:136px;text-align:center;top:1210.39px;font-size:17.5px;line-height:17.5px;color:#0a0a0a;font-weight:400;">7</div>
<div class="t" style="left:886.33px;width:136px;text-align:center;top:1237.88px;font-size:18.1px;line-height:18.1px;color:#4a5565;font-weight:400;">Projects</div>
<div class="t" style="left:1043.00px;width:136px;text-align:center;top:1210.39px;font-size:17.5px;line-height:17.5px;color:#0a0a0a;font-weight:400;">156</div>
<div class="t" style="left:1043.00px;width:136px;text-align:center;top:1237.88px;font-size:18.1px;line-height:18.1px;color:#4a5565;font-weight:400;">Tasks</div>
<div class="t" style="left:1199.67px;width:136px;text-align:center;top:1210.39px;font-size:17.5px;line-height:17.5px;color:#0a0a0a;font-weight:400;">40h</div>
<div class="t" style="left:1199.67px;width:136px;text-align:center;top:1237.88px;font-size:18.1px;line-height:18.1px;color:#4a5565;font-weight:400;">This Week</div>
<div class="t" style="left:886.00px;top:1283.34px;font-size:18.5px;line-height:18.5px;color:#4a5565;font-weight:400;">Performance</div>
<div class="t" style="left:1036.00px;width:300px;text-align:right;top:1284.19px;font-size:17.5px;line-height:17.5px;color:#d08700;font-weight:400">89%</div>
<div class="b" style="left:886.00px;top:1316.00px;width:450.00px;height:9.00px;background:#d4d4d8;border-radius:5px;overflow:hidden;"></div>
<div class="b" style="left:886.00px;top:1316.00px;width:400.50px;height:9.00px;background:#0a0a14;border-radius:5px 0 0 5px;"></div>
<div class="t" style="left:886.00px;top:1349.68px;font-size:17.8px;line-height:17.8px;color:#4a5565;font-weight:400;">Skills</div>
<div class="b" style="left:886.00px;top:1381.00px;width:66.31px;height:27.00px;background:#ededf0;border-radius:8px;"></div>
<div class="t" style="left:896.50px;top:1387.20px;font-size:14.3px;line-height:14.3px;color:#0a0a0a;font-weight:400;-webkit-text-stroke:0.35px #0a0a0a;">Testing</div>
<div class="b" style="left:958.31px;top:1381.00px;width:93.33px;height:27.00px;background:#ededf0;border-radius:8px;"></div>
<div class="t" style="left:968.81px;top:1387.20px;font-size:14.3px;line-height:14.3px;color:#0a0a0a;font-weight:400;-webkit-text-stroke:0.35px #0a0a0a;">Automation</div>
<div class="b" style="left:886.00px;top:1426.50px;width:218.00px;height:36.50px;background:#fff;border:1px solid #e5e7eb;border-radius:8px;box-sizing:border-box;"></div>
<svg class="i" style="left:950.75px;top:1436.00px" width="18" height="18" viewBox="0 0 24 24" fill="none" stroke="#0a0a0a" stroke-width="2.1" stroke-linecap="round" stroke-linejoin="round"><rect width="20" height="16" x="2" y="4" rx="2"/><path d="m22 7-8.97 5.7a1.94 1.94 0 0 1-2.06 0L2 7"/></svg>
<div class="t" style="left:982.25px;top:1436.28px;font-size:16.5px;line-height:16.5px;color:#0a0a0a;font-weight:400;-webkit-text-stroke:0.6px #0a0a0a;">Contact</div>
<div class="b" style="left:1115.00px;top:1426.50px;width:221.00px;height:36.50px;background:#fff;border:1px solid #e5e7eb;border-radius:8px;box-sizing:border-box;"></div>
<div class="t" style="left:1025.50px;width:400px;text-align:center;top:1437.15px;font-size:16.6px;line-height:16.6px;color:#0a0a0a;font-weight:400;-webkit-text-stroke:0.6px #0a0a0a;">View Profile</div>
<div class="b" style="left:1393.00px;top:1006.00px;width:507.00px;height:486.50px;background:#fff;border:1px solid #e5e7eb;border-radius:16px;box-sizing:border-box;box-shadow:0 1px 2px rgba(0,0,0,0.04);"></div>
<div class="b" style="left:1422.00px;top:1036.50px;width:56.00px;height:56.00px;background:#ebebef;border-radius:50%;"></div>
<div class="t" style="left:1422.00px;width:56px;text-align:center;top:1056.46px;font-size:18px;line-height:18px;color:#111827;font-weight:400;">RK</div>
<div class="t" style="left:1492.00px;top:1041.06px;font-size:20.6px;line-height:20.6px;color:#0a0a0a;font-weight:400;-webkit-text-stroke:0.6px #0a0a0a;">Robert Kim</div>
<div class="t" style="left:1492.00px;top:1072.89px;font-size:18.8px;line-height:18.8px;color:#4a5565;font-weight:400;">DevOps Engineer</div>
<div class="b" style="left:1770.61px;top:1034.50px;width:99.39px;height:26.00px;background:#fff;border:1px solid #e5e7eb;border-radius:8px;box-sizing:border-box;"></div>
<div class="t" style="left:1781.61px;top:1040.53px;font-size:14.5px;line-height:14.5px;color:#0a0a0a;font-weight:400;-webkit-text-stroke:0.6px #0a0a0a;">Engineering</div>
<svg class="i" style="left:1421.75px;top:1118.75px" width="18" height="18" viewBox="0 0 24 24" fill="none" stroke="#9ca3af" stroke-width="2" stroke-linecap="round" stroke-linejoin="round"><rect width="20" height="16" x="2" y="4" rx="2"/><path d="m22 7-8.97 5.7a1.94 1.94 0 0 1-2.06 0L2 7"/></svg>
<div class="t" style="left:1450.00px;top:1119.62px;font-size:18.4px;line-height:18.4px;color:#4a5565;font-weight:400;">robert.kim@qmswrapper.com</div>
<svg class="i" style="left:1421.50px;top:1161.50px" width="18" height="18" viewBox="0 0 24 24" fill="none" stroke="#9ca3af" stroke-width="2" stroke-linecap="round" stroke-linejoin="round"><rect width="18" height="18" x="3" y="4" rx="2" ry="2"/><line x1="16" x2="16" y1="2" y2="6"/><line x1="8" x2="8" y1="2" y2="6"/><line x1="3" x2="21" y1="10" y2="10"/></svg>
<div class="t" style="left:1450.00px;top:1163.02px;font-size:17.7px;line-height:17.7px;color:#4a5565;font-weight:400;">Joined Jun 2023</div>
<div class="t" style="left:1422.17px;width:136px;text-align:center;top:1210.39px;font-size:17.5px;line-height:17.5px;color:#0a0a0a;font-weight:400;">3</div>
<div class="t" style="left:1422.17px;width:136px;text-align:center;top:1237.88px;font-size:18.1px;line-height:18.1px;color:#4a5565;font-weight:400;">Projects</div>
<div class="t" style="left:1578.50px;width:136px;text-align:center;top:1210.39px;font-size:17.5px;line-height:17.5px;color:#0a0a0a;font-weight:400;">54</div>
<div class="t" style="left:1578.50px;width:136px;text-align:center;top:1237.88px;font-size:18.1px;line-height:18.1px;color:#4a5565;font-weight:400;">Tasks</div>
<div class="t" style="left:1734.83px;width:136px;text-align:center;top:1210.39px;font-size:17.5px;line-height:17.5px;color:#0a0a0a;font-weight:400;">36h</div>
<div class="t" style="left:1734.83px;width:136px;text-align:center;top:1237.88px;font-size:18.1px;line-height:18.1px;color:#4a5565;font-weight:400;">This Week</div>
<div class="t" style="left:1422.00px;top:1283.34px;font-size:18.5px;line-height:18.5px;color:#4a5565;font-weight:400;">Performance</div>
<div class="t" style="left:1571.00px;width:300px;text-align:right;top:1284.19px;font-size:17.5px;line-height:17.5px;color:#d08700;font-weight:400">87%</div>
<div class="b" style="left:1422.00px;top:1316.00px;width:449.00px;height:9.00px;background:#d4d4d8;border-radius:5px;overflow:hidden;"></div>
<div class="b" style="left:1422.00px;top:1316.00px;width:390.63px;height:9.00px;background:#0a0a14;border-radius:5px 0 0 5px;"></div>
<div class="t" style="left:1422.00px;top:1349.68px;font-size:17.8px;line-height:17.8px;color:#4a5565;font-weight:400;">Skills</div>
<div class="b" style="left:1422.00px;top:1381.00px;width:66.29px;height:27.00px;background:#ededf0;border-radius:8px;"></div>
<div class="t" style="left:1432.50px;top:1387.20px;font-size:14.3px;line-height:14.3px;color:#0a0a0a;font-weight:400;-webkit-text-stroke:0.35px #0a0a0a;">Docker</div>
<div class="b" style="left:1494.29px;top:1381.00px;width:94.14px;height:27.00px;background:#ededf0;border-radius:8px;"></div>
<div class="t" style="left:1504.79px;top:1387.20px;font-size:14.3px;line-height:14.3px;color:#0a0a0a;font-weight:400;-webkit-text-stroke:0.35px #0a0a0a;">Kubernetes</div>
<div class="b" style="left:1422.00px;top:1426.50px;width:217.00px;height:36.50px;background:#fff;border:1px solid #e5e7eb;border-radius:8px;box-sizing:border-box;"></div>
<svg class="i" style="left:1486.25px;top:1436.00px" width="18" height="18" viewBox="0 0 24 24" fill="none" stroke="#0a0a0a" stroke-width="2.1" stroke-linecap="round" stroke-linejoin="round"><rect width="20" height="16" x="2" y="4" rx="2"/><path d="m22 7-8.97 5.7a1.94 1.94 0 0 1-2.06 0L2 7"/></svg>
<div class="t" style="left:1517.75px;top:1436.28px;font-size:16.5px;line-height:16.5px;color:#0a0a0a;font-weight:400;-webkit-text-stroke:0.6px #0a0a0a;">Contact</div>
<div class="b" style="left:1650.00px;top:1426.50px;width:221.00px;height:36.50px;background:#fff;border:1px solid #e5e7eb;border-radius:8px;box-sizing:border-box;"></div>
<div class="t" style="left:1560.50px;width:400px;text-align:center;top:1437.15px;font-size:16.6px;line-height:16.6px;color:#0a0a0a;font-weight:400;-webkit-text-stroke:0.6px #0a0a0a;">View Profile</div>
</body></html>
